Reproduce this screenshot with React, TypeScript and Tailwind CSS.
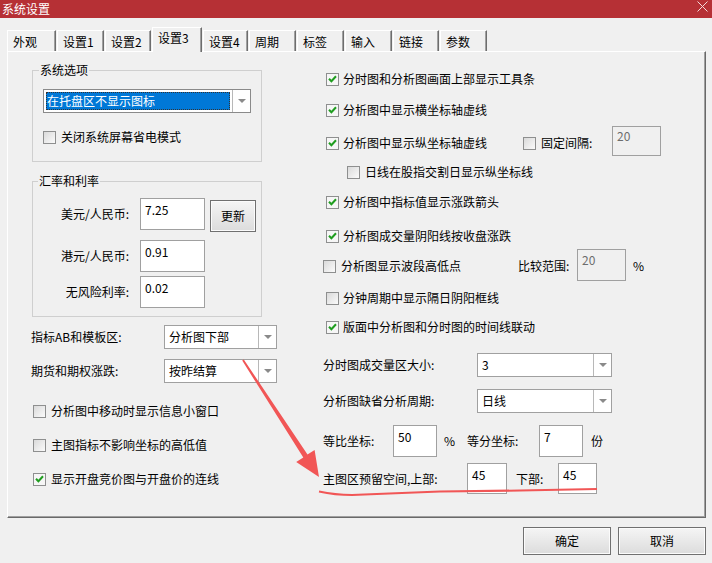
import React from "react";

function Arrow() {
  return (
    <svg width="8" height="4" viewBox="0 0 8 4">
      <polygon points="0,0 8,0 4,4" fill="#8a8a8a" />
    </svg>
  );
}

function Box({ checked }: { checked?: boolean }) {
  return (
    <span
      className={
        checked
          ? "w-[13px] h-[13px] flex-none border border-[#8e8f8f] bg-[#f6f6f6] flex items-center justify-center"
          : "w-[13px] h-[13px] flex-none border border-[#8e8f8f] bg-linear-to-br from-[#dadada] to-[#fbfbfb] flex items-center justify-center"
      }
    >
      {checked && (
        <svg width="9" height="8" viewBox="0 0 9 8">
          <path d="M1 3.8 L3.4 6.3 L8 1.3" fill="none" stroke="#1f9d1f" strokeWidth="2" />
        </svg>
      )}
    </span>
  );
}

function Check({ checked, label, gap = "ml-[4px]" }: { checked?: boolean; label: string; gap?: string }) {
  return (
    <div className="flex items-center h-[16px] whitespace-nowrap">
      <Box checked={checked} />
      <span className={gap}>{label}</span>
    </div>
  );
}

function Select({ value, className }: { value: string; className: string }) {
  return (
    <div className={"h-[24px] border border-[#a0a0a0] bg-white flex " + className}>
      <div className="flex-1 flex items-center pl-[4px] whitespace-nowrap">{value}</div>
      <div className="w-[18px] border-l border-[#b8b8b8] flex items-center justify-center">
        <Arrow />
      </div>
    </div>
  );
}

function Field({ value, className }: { value: string; className: string }) {
  return <div className={"border border-[#a0a0a0] bg-white pl-[4px] pt-[3px] flex-none " + className}>{value}</div>;
}

function Btn({ label, className }: { label: string; className: string }) {
  return (
    <div
      className={
        "border border-[#707070] bg-linear-to-b from-[#f5f5f5] to-[#dcdcdc] shadow-[inset_0_0_0_1px_#fbfbfb] flex items-center justify-center flex-none " +
        className
      }
    >
      {label}
    </div>
  );
}

const tabs: [string, string][] = [
  ["外观", "w-[49px]"],
  ["设置1", "w-[47px]"],
  ["设置2", "w-[46px]"],
  ["设置3", "w-[50px]"],
  ["设置4", "w-[45px]"],
  ["周期", "w-[47px]"],
  ["标签", "w-[47px]"],
  ["输入", "w-[47px]"],
  ["链接", "w-[46px]"],
  ["参数", "w-[47px]"],
];

export default function App() {
  return (
    <div className="relative w-[712px] h-[563px] bg-[#f0f0f0] overflow-hidden text-[12px] leading-[16px] text-black font-['Noto_Sans_CJK_SC','Microsoft_YaHei',sans-serif]">
      {/* title bar */}
      <div className="h-[18px] bg-[#b63035] flex items-center justify-between pl-[2px] pr-[4px] text-white text-[12px]">
        <span>系统设置</span>
        <svg width="11" height="11" viewBox="0 0 11 11" className="mb-[6px]">
          <path d="M0.5 0.5 L10.5 10.5 M10.5 0.5 L0.5 10.5" stroke="#f3dada" strokeWidth="1" />
        </svg>
      </div>

      {/* tabs */}
      <div className="flex items-end h-[24px] mt-[9px] pl-[7px] gap-[1px]">
        {tabs.map(([t, w]) =>
          t === "设置3" ? (
            <div
              key={t}
              className={
                "relative z-[1] h-[25px] -mb-[1px] bg-[#f0f0f0] border-t border-l border-white border-r border-r-[#6d6d6d] shadow-[inset_-1px_0_0_#a0a0a0] pl-[5px] pt-[2px] " +
                w
              }
            >
              {t}
            </div>
          ) : (
            <div
              key={t}
              className={
                "h-[21px] bg-[#f0f0f0] border-t border-l border-white border-r border-r-[#6d6d6d] shadow-[inset_-1px_0_0_#a0a0a0] pl-[5px] pt-[3px] " +
                w
              }
            >
              {t}
            </div>
          )
        )}
      </div>

      {/* panel */}
      <div className="ml-[7px] w-[699px] h-[467px] border-t border-l border-white border-r border-b border-r-[#696969] border-b-[#696969] shadow-[inset_-1px_-1px_0_#a0a0a0] flex">
        {/* left column */}
        <div className="w-[292px] pl-[23px] pt-[11px] flex flex-col">
          <fieldset className="ml-[1px] w-[230px] border border-[#cfcfcf] pb-[16px]">
            <legend className="ml-[6px] px-[1px] leading-[14px]">系统选项</legend>
            <div className="ml-[10px] mt-[12px] w-[208px] h-[24px] border border-[#8a8a8a] bg-white flex">
              <div className="flex-1 m-[2px] bg-[#0078d7] text-white border border-dotted border-[#333] flex items-center pl-[0px] whitespace-nowrap">
                在托盘区不显示图标
              </div>
              <div className="w-[18px] border-l border-[#b8b8b8] flex items-center justify-center">
                <Arrow />
              </div>
            </div>
            <div className="ml-[10px] mt-[16px]">
              <Check label="关闭系统屏幕省电模式" gap="ml-[5px]" />
            </div>
          </fieldset>

          <fieldset className="ml-[1px] mt-[12px] w-[230px] border border-[#cfcfcf] pb-[8px]">
            <legend className="ml-[5px] px-[1px] leading-[14px]">汇率和利率</legend>
            <div className="flex items-center h-[32px] mt-[10px]">
              <span className="w-[96px] text-right">美元/人民币:</span>
              <Field value="7.25" className="ml-[11px] w-[65px] h-[32px]" />
              <Btn label="更新" className="ml-[5px] w-[46px] h-[32px] mt-[3px]" />
            </div>
            <div className="flex items-center h-[32px] mt-[10px]">
              <span className="w-[96px] text-right">港元/人民币:</span>
              <Field value="0.91" className="ml-[11px] w-[65px] h-[32px]" />
            </div>
            <div className="flex items-center h-[32px] mt-[4px]">
              <span className="w-[96px] text-right">无风险利率:</span>
              <Field value="0.02" className="ml-[11px] w-[65px] h-[32px]" />
            </div>
          </fieldset>

          <div className="flex items-center h-[24px] mt-[8px]">
            <span className="w-[133px] whitespace-nowrap">指标AB和模板区:</span>
            <Select value="分析图下部" className="w-[113px]" />
          </div>
          <div className="flex items-center h-[24px] mt-[10px]">
            <span className="w-[133px] whitespace-nowrap">期货和期权涨跌:</span>
            <Select value="按昨结算" className="w-[113px]" />
          </div>

          <div className="pl-[2px] mt-[20px]">
            <Check label="分析图中移动时显示信息小窗口" gap="ml-[5px]" />
          </div>
          <div className="pl-[2px] mt-[18px]">
            <Check label="主图指标不影响坐标的高低值" gap="ml-[5px]" />
          </div>
          <div className="pl-[2px] mt-[18px]">
            <Check checked label="显示开盘竞价图与开盘价的连线" gap="ml-[5px]" />
          </div>
        </div>

        {/* right column */}
        <div className="flex-1 pl-[23px] pt-[19px] flex flex-col">
          <div className="pl-[3px]">
            <Check checked label="分时图和分析图画面上部显示工具条" />
          </div>
          <div className="pl-[3px] mt-[15px]">
            <Check checked label="分析图中显示横坐标轴虚线" />
          </div>
          <div className="pl-[3px] mt-[17px] flex items-center h-[16px]">
            <div className="w-[197px]">
              <Check checked label="分析图中显示纵坐标轴虚线" />
            </div>
            <Box />
            <span className="ml-[5px] w-[71px] whitespace-nowrap">固定间隔:</span>
            <div className="w-[49px] h-[30px] mb-[4px] flex-none border border-[#a0a0a0] bg-[#f0f0f0] text-[#6d6d6d] pl-[4px] pt-[1px]">
              20
            </div>
          </div>
          <div className="pl-[24px] mt-[13px]">
            <Check label="日线在股指交割日显示纵坐标线" gap="ml-[5px]" />
          </div>
          <div className="pl-[3px] mt-[14px]">
            <Check checked label="分析图中指标值显示涨跌箭头" />
          </div>
          <div className="pl-[3px] mt-[18px]">
            <Check checked label="分析图成交量阴阳线按收盘涨跌" />
          </div>
          <div className="mt-[14px] flex items-center h-[16px]">
            <div className="w-[195px]">
              <Check label="分析图显示波段高低点" gap="ml-[5px]" />
            </div>
            <span className="w-[59px] whitespace-nowrap">比较范围:</span>
            <div className="w-[49px] h-[32px] mb-[2px] flex-none border border-[#a0a0a0] bg-[#f0f0f0] text-[#6d6d6d] pl-[4px] pt-[2px]">
              20
            </div>
            <span className="ml-[7px]">%</span>
          </div>
          <div className="pl-[3px] mt-[16px]">
            <Check label="分钟周期中显示隔日阴阳框线" />
          </div>
          <div className="pl-[3px] mt-[13px]">
            <Check checked label="版面中分析图和分时图的时间线联动" />
          </div>

          <div className="flex items-center h-[24px] mt-[18px]">
            <span className="w-[154px] whitespace-nowrap">分时图成交量区大小:</span>
            <Select value="3" className="w-[135px]" />
          </div>
          <div className="flex items-center h-[24px] mt-[12px]">
            <span className="w-[154px] whitespace-nowrap">分析图缺省分析周期:</span>
            <Select value="日线" className="w-[135px]" />
          </div>
          <div className="flex items-center h-[32px] mt-[12px]">
            <span className="w-[70px] whitespace-nowrap">等比坐标:</span>
            <Field value="50" className="w-[44px] h-[32px]" />
            <span className="w-[30px] pl-[7px]">%</span>
            <span className="w-[72px] whitespace-nowrap">等分坐标:</span>
            <Field value="7" className="w-[44px] h-[32px]" />
            <span className="ml-[8px]">份</span>
          </div>
          <div className="flex items-center h-[31px] mt-[6px]">
            <span className="w-[144px] whitespace-nowrap">主图区预留空间,上部:</span>
            <Field value="45" className="w-[40px] h-[31px]" />
            <span className="ml-[9px] w-[42px] whitespace-nowrap">下部:</span>
            <Field value="45" className="w-[39px] h-[31px]" />
          </div>
        </div>
      </div>

      {/* buttons */}
      <div className="mt-[9px] flex justify-end gap-[7px] pr-[6px]">
        <Btn label="确定" className="w-[88px] h-[28px]" />
        <Btn label="取消" className="w-[88px] h-[28px]" />
      </div>

      {/* red annotation overlay */}
      <svg className="absolute inset-0 pointer-events-none" width="712" height="563" viewBox="0 0 712 563">
        <polygon
          points="242.2,360.5 243.8,359.5 307.5,454.6 314.6,450 319,477 296.2,462 303.3,457.4"
          fill="#f15656"
        />
        <path
          d="M319 491.5 Q 335 495 352 495 Q 395 493 440 491.5 L 520 490.5 L 597 489"
          fill="none"
          stroke="#f15656"
          strokeWidth="2"
        />
      </svg>
    </div>
  );
}
